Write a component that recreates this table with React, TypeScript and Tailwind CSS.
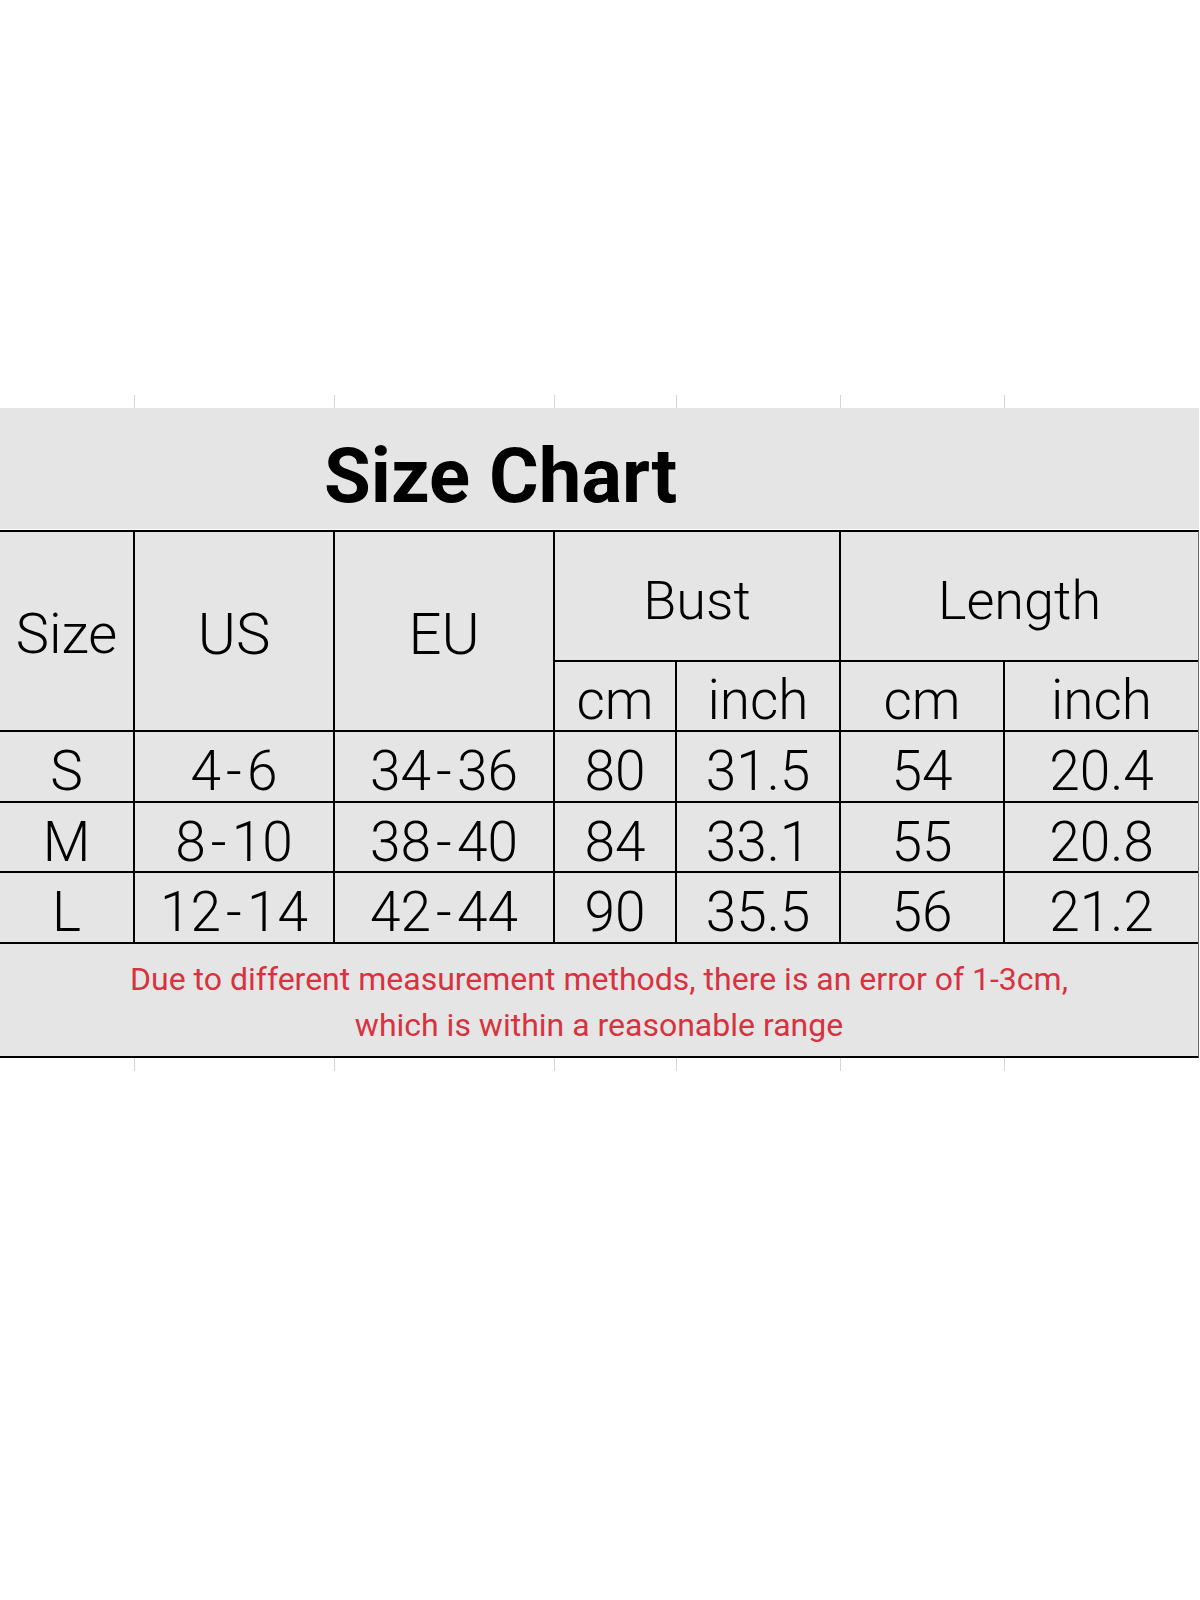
const cols = "grid grid-cols-[133px_198px_218px_120px_162px_162px_193px] gap-x-[2px]";

const rows = [
  { size: "S", us: "4-6", eu: "34-36", bcm: "80", bin: "31.5", lcm: "54", lin: "20.4" },
  { size: "M", us: "8-10", eu: "38-40", bcm: "84", bin: "33.1", lcm: "55", lin: "20.8" },
  { size: "L", us: "12-14", eu: "42-44", bcm: "90", bin: "35.5", lcm: "56", lin: "21.2" },
];

function Ticks() {
  return (
    <div className={`${cols} h-[13px] w-[1199px]`}>
      {Array.from({ length: 7 }).map((_, i) => (
        <div key={i} className="relative">
          {i < 6 && <div className="absolute right-[-2px] top-0 h-full w-px bg-[#d6d6d6]" />}
        </div>
      ))}
    </div>
  );
}

function Range({ v }: { v: string }) {
  const [a, b] = v.split("-");
  return (
    <span>
      {a}
      <span className="mx-[5px]">-</span>
      {b}
    </span>
  );
}

export default function App() {
  const cell = "bg-[#e6e5e6] flex items-center justify-center";
  const num = `${cell} pt-[10px] text-[55px] font-light text-black`;
  return (
    <div className="h-[1600px] w-[1200px] bg-white font-['Roboto','Liberation_Sans',sans-serif]">
      <div className="h-[395px]" />
      <Ticks />
      <div className="w-[1199px] bg-[#e6e5e6]">
        <div className="flex h-[121px] items-center pl-[324px] pt-[14px]">
          <h1 className="text-[76px] font-bold leading-none text-black">Size Chart</h1>
        </div>
        <div className="h-px bg-white" />
        <div
          className={`${cols} grid-rows-[128px_68px_69px_68px_69px_112px] gap-y-[2px] border-y-2 border-black border-r border-r-[#6b6b6b] bg-black`}
        >
          <div className={`${cell} row-span-2 pt-[6px] text-[56px] font-light`}>Size</div>
          <div className={`${cell} row-span-2 pt-[6px] text-[58px] font-light`}>US</div>
          <div className={`${cell} row-span-2 pt-[6px] text-[58px] font-light`}>EU</div>
          <div className={`${cell} col-span-2 pt-[8px] text-[54px] font-light`}>Bust</div>
          <div className={`${cell} col-span-2 pt-[8px] text-[54px] font-light`}>Length</div>
          <div className={`${cell} pt-[8px] text-[55px] font-light`}>cm</div>
          <div className={`${cell} pt-[8px] text-[55px] font-light`}>inch</div>
          <div className={`${cell} pt-[8px] text-[55px] font-light`}>cm</div>
          <div className={`${cell} pt-[8px] text-[55px] font-light`}>inch</div>
          {rows.map((r) => (
            <div key={r.size} className="contents">
              <div className={num}>{r.size}</div>
              <div className={num}>
                <Range v={r.us} />
              </div>
              <div className={num}>
                <Range v={r.eu} />
              </div>
              <div className={num}>{r.bcm}</div>
              <div className={num}>{r.bin}</div>
              <div className={num}>{r.lcm}</div>
              <div className={num}>{r.lin}</div>
            </div>
          ))}
          <div className={`${cell} col-span-7 flex-col pt-[4px] text-[32px] leading-[46px] text-[#d7333f]`}>
            <p>Due to different measurement methods, there is an error of 1-3cm,</p>
            <p>which is within a reasonable range</p>
          </div>
        </div>
      </div>
      <Ticks />
    </div>
  );
}
